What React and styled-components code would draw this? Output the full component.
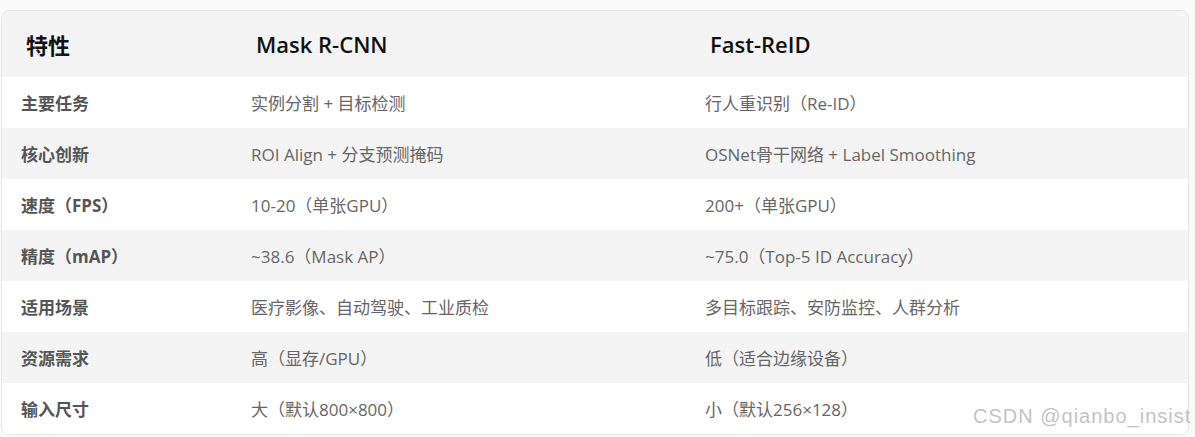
import React from "react";
import styled, { createGlobalStyle } from "styled-components";

const Global = createGlobalStyle`
  html, body { margin: 0; padding: 0; background: #fafafa; }
  body { font-family: "Open Sans", "Noto Sans CJK SC", sans-serif; }
`;

const Page = styled.div`
  position: relative;
  width: 1195px;
  height: 437px;
  padding: 10px 0 0 1px;
  box-sizing: border-box;
`;

const Card = styled.div`
  width: 1188px;
  border: 1px solid #e6e6e6;
  border-radius: 8px;
  overflow: hidden;
  background: #fff;
  box-sizing: border-box;
`;

const Row = styled.div`
  display: grid;
  grid-template-columns: 230px 454px 1fr;
  align-items: center;
  height: ${(p) => (p.$head ? 66 : 51)}px;
  background: ${(p) => (p.$shade ? "#f4f4f4" : "#ffffff")};
`;

const HeadCell = styled.div`
  padding-left: 24px;
  font-size: 22px;
  font-weight: ${(p) => (p.$first ? 700 : 600)};
  color: #111;
  white-space: nowrap;
`;

const Cell = styled.div`
  padding-left: 19px;
  font-size: 17px;
  font-weight: ${(p) => (p.$first ? 700 : 400)};
  color: ${(p) => (p.$first ? "#555" : "#666")};
  white-space: nowrap;
`;

const Watermark = styled.div`
  position: absolute;
  left: 973px;
  top: 405px;
  font-family: "Liberation Sans", Arial, sans-serif;
  font-size: 20px;
  letter-spacing: 1px;
  color: #c4c4c4;
  white-space: nowrap;
`;

const rows = [
  ["主要任务", "实例分割 + 目标检测", "行人重识别（Re-ID）"],
  ["核心创新", "ROI Align + 分支预测掩码", "OSNet骨干网络 + Label Smoothing"],
  ["速度（FPS）", "10-20（单张GPU）", "200+（单张GPU）"],
  ["精度（mAP）", "~38.6（Mask AP）", "~75.0（Top-5 ID Accuracy）"],
  ["适用场景", "医疗影像、自动驾驶、工业质检", "多目标跟踪、安防监控、人群分析"],
  ["资源需求", "高（显存/GPU）", "低（适合边缘设备）"],
  ["输入尺寸", "大（默认800×800）", "小（默认256×128）"],
];

export default function App() {
  return (
    <Page>
      <Global />
      <Card>
        <Row $head $shade>
          <HeadCell $first>特性</HeadCell>
          <HeadCell>Mask R-CNN</HeadCell>
          <HeadCell>Fast-ReID</HeadCell>
        </Row>
        {rows.map((r, i) => (
          <Row key={i} $shade={i % 2 === 1}>
            <Cell $first>{r[0]}</Cell>
            <Cell>{r[1]}</Cell>
            <Cell>{r[2]}</Cell>
          </Row>
        ))}
      </Card>
      <Watermark>CSDN @qianbo_insist</Watermark>
    </Page>
  );
}
